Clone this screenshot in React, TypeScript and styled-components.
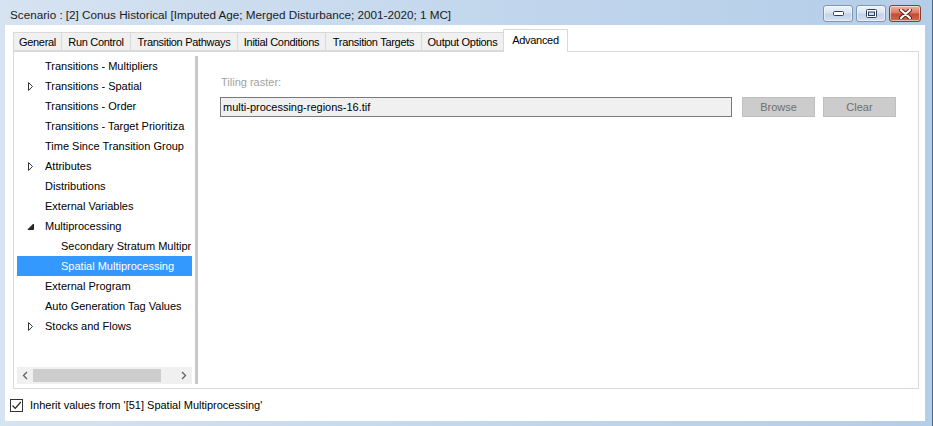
import React from "react";
import styled, { createGlobalStyle } from "styled-components";

const GlobalStyle = createGlobalStyle`
  html, body { margin: 0; padding: 0; background: #ffffff; }
  body { font-family: "Liberation Sans", Arial, sans-serif; font-size: 11px; color: #000; }
  * { box-sizing: border-box; }
`;

const Window = styled.div`
  width: 933px;
  height: 426px;
  display: flex;
  flex-direction: column;
  background: linear-gradient(to right, #d6e3f1 0%, #c3d7ed 50%, #b4cde8 100%);
  border-right: 1px solid #4a6788;
  overflow: hidden;
`;

const TitleBar = styled.div`
  height: 25px;
  flex: none;
  display: flex;
  align-items: flex-start;
  padding-left: 10px;
  padding-right: 11px;
`;

const Title = styled.div`
  font-size: 11.7px;
  line-height: 14px;
  padding-top: 8px;
  color: #1b1b1b;
  white-space: nowrap;
`;

const WinButtons = styled.div`
  margin-left: auto;
  padding-top: 5px;
  display: flex;
  gap: 3px;
`;

const WinButton = styled.div<{ $close?: boolean; $w: number }>`
  width: ${(p) => p.$w}px;
  height: 17px;
  border-radius: 3px;
  display: flex;
  align-items: center;
  justify-content: center;
  border: 1px solid ${(p) => (p.$close ? "#8b3b2c" : "#7f96b4")};
  background: ${(p) =>
    p.$close
      ? "linear-gradient(to bottom, #eeb3a5 0%, #d9765f 48%, #c44a32 52%, #d0684f 100%)"
      : "linear-gradient(to bottom, #eef3fa 0%, #d9e4f1 48%, #c2d3e8 52%, #d3e1f1 100%)"};
  box-shadow: inset 0 0 0 1px rgba(255, 255, 255, 0.55);
`;

const Client = styled.div`
  flex: 1;
  margin: 0 7px 5px 5px;
  background: #ffffff;
  display: flex;
  flex-direction: column;
`;

const TabControl = styled.div`
  margin: 4px 6px 0 8px;
  display: flex;
  flex-direction: column;
`;

const TabStrip = styled.div`
  height: 22px;
  display: flex;
  align-items: flex-end;
  position: relative;
  z-index: 1;
`;

const Tab = styled.div<{ $w: number; $active?: boolean }>`
  width: ${(p) => p.$w}px;
  height: ${(p) => (p.$active ? 23 : 19)}px;
  margin-right: -1px;
  margin-bottom: ${(p) => (p.$active ? -1 : 0)}px;
  border: 1px solid #d9d9d9;
  border-bottom: ${(p) => (p.$active ? "none" : "1px solid #d9d9d9")};
  background: ${(p) => (p.$active ? "#ffffff" : "#f0f0f0")};
  display: flex;
  align-items: center;
  justify-content: center;
  padding-bottom: ${(p) => (p.$active ? 2 : 0)}px;
  white-space: nowrap;
  letter-spacing: -0.3px;
  color: #000;
  position: relative;
  z-index: ${(p) => (p.$active ? 2 : 1)};
`;

const TabPanel = styled.div`
  height: 338px;
  border: 1px solid #d9d9d9;
  background: #ffffff;
  display: flex;
  padding: 4px 0 4px 3px;
`;

const TreeWrap = styled.div`
  width: 175px;
  display: flex;
  flex-direction: column;
  margin-right: 3px;
`;

const TreeRows = styled.div`
  flex: 1;
  overflow: hidden;
`;

const Row = styled.div<{ $level: number; $selected?: boolean }>`
  height: 20px;
  display: flex;
  align-items: center;
  padding-left: ${(p) => (p.$level === 0 ? 28 : 44)}px;
  background: ${(p) => (p.$selected ? "#3399ff" : "transparent")};
  color: ${(p) => (p.$selected ? "#ffffff" : "#000000")};
  white-space: nowrap;
  overflow: hidden;
  position: relative;
`;

const Expander = styled.span`
  position: absolute;
  left: 10px;
  top: 6px;
  width: 8px;
  height: 9px;
  display: flex;
`;

const HScroll = styled.div`
  height: 17px;
  display: flex;
  align-items: center;
  background: #f0f0f0;
`;

const ScrollArrow = styled.div`
  width: 16px;
  height: 17px;
  display: flex;
  align-items: center;
  justify-content: center;
  flex: none;
`;

const Track = styled.div`
  flex: 1;
  height: 17px;
  display: flex;
  align-items: center;
`;

const Thumb = styled.div`
  height: 13px;
  background: #cdcdcd;
`;

const Splitter = styled.div`
  width: 3px;
  background: #c9c9c9;
  flex: none;
`;

const Content = styled.div`
  flex: 1;
  padding: 19px 21px 0 22px;
  display: flex;
  flex-direction: column;
`;

const FieldLabel = styled.div`
  color: #a2a2a2;
  height: 14px;
  line-height: 14px;
  padding-left: 1px;
  margin-bottom: 8px;
`;

const FieldRow = styled.div`
  display: flex;
  align-items: center;
`;

const TextBox = styled.div`
  width: 512px;
  height: 20px;
  border: 1px solid #7a7a7a;
  background: #f0f0f0;
  padding-left: 2px;
  display: flex;
  align-items: center;
  white-space: nowrap;
`;

const Button = styled.div<{ $ml: number }>`
  width: 73px;
  height: 20px;
  margin-left: ${(p) => p.$ml}px;
  background: #cccccc;
  border: 1px solid #bfbfbf;
  color: #6f6f6f;
  display: flex;
  align-items: center;
  justify-content: center;
`;

const Footer = styled.div`
  display: flex;
  align-items: center;
  padding: 9px 0 0 5px;
`;

const CheckBox = styled.span`
  width: 13px;
  height: 13px;
  border: 1px solid #333333;
  background: #ffffff;
  display: flex;
  align-items: center;
  justify-content: center;
  margin-right: 7px;
`;

const FooterLabel = styled.span`
  line-height: 14px;
`;

type Item = { label: string; level: number; exp?: "closed" | "open"; selected?: boolean };

const items: Item[] = [
  { label: "Transitions - Multipliers", level: 0 },
  { label: "Transitions - Spatial", level: 0, exp: "closed" },
  { label: "Transitions - Order", level: 0 },
  { label: "Transitions - Target Prioritiza", level: 0 },
  { label: "Time Since Transition Group", level: 0 },
  { label: "Attributes", level: 0, exp: "closed" },
  { label: "Distributions", level: 0 },
  { label: "External Variables", level: 0 },
  { label: "Multiprocessing", level: 0, exp: "open" },
  { label: "Secondary Stratum Multipr", level: 1 },
  { label: "Spatial Multiprocessing", level: 1, selected: true },
  { label: "External Program", level: 0 },
  { label: "Auto Generation Tag Values", level: 0 },
  { label: "Stocks and Flows", level: 0, exp: "closed" },
];

const tabs: { label: string; w: number; active?: boolean }[] = [
  { label: "General", w: 49 },
  { label: "Run Control", w: 70 },
  { label: "Transition Pathways", w: 108 },
  { label: "Initial Conditions", w: 89 },
  { label: "Transition Targets", w: 97 },
  { label: "Output Options", w: 83 },
  { label: "Advanced", w: 65, active: true },
];

const ClosedArrow = () => (
  <svg width="8" height="9" viewBox="0 0 8 9">
    <path d="M1.5 0.5 L5.5 4.5 L1.5 8.5 Z" fill="#fff" stroke="#333" strokeWidth="1" />
  </svg>
);

const OpenArrow = () => (
  <svg width="8" height="9" viewBox="0 0 8 9">
    <path d="M6.5 2 L6.5 7.5 L1 7.5 Z" fill="#262626" stroke="#262626" strokeWidth="1" />
  </svg>
);

export default function App() {
  return (
    <>
      <GlobalStyle />
      <Window>
        <TitleBar>
          <Title>Scenario : [2] Conus Historical [Imputed Age; Merged Disturbance; 2001-2020; 1 MC]</Title>
          <WinButtons>
            <WinButton $w={30}>
              <svg width="11" height="5" viewBox="0 0 11 5">
                <rect x="0.5" y="0.5" width="10" height="4" rx="1" fill="#fff" stroke="#2d3e5a" />
              </svg>
            </WinButton>
            <WinButton $w={30}>
              <svg width="11" height="9" viewBox="0 0 11 9">
                <rect x="0.5" y="0.5" width="10" height="8" rx="1" fill="#fff" stroke="#2d3e5a" />
                <rect x="2.5" y="3" width="6" height="3.5" fill="#cfdbea" stroke="#2d3e5a" strokeWidth="1" />
              </svg>
            </WinButton>
            <WinButton $w={32} $close>
              <svg width="13" height="10" viewBox="0 0 13 10">
                <path d="M2 1 L11 9 M11 1 L2 9" stroke="#5a1d14" strokeWidth="4" strokeLinecap="round" />
                <path d="M2 1 L11 9 M11 1 L2 9" stroke="#ffffff" strokeWidth="2.2" strokeLinecap="round" />
              </svg>
            </WinButton>
          </WinButtons>
        </TitleBar>
        <Client>
          <TabControl>
            <TabStrip>
              {tabs.map((t) => (
                <Tab key={t.label} $w={t.w} $active={t.active}>
                  {t.label}
                </Tab>
              ))}
            </TabStrip>
            <TabPanel>
              <TreeWrap>
                <TreeRows>
                  {items.map((it) => (
                    <Row key={it.label} $level={it.level} $selected={it.selected}>
                      {it.exp && <Expander>{it.exp === "closed" ? <ClosedArrow /> : <OpenArrow />}</Expander>}
                      {it.label}
                    </Row>
                  ))}
                </TreeRows>
                <HScroll>
                  <ScrollArrow>
                    <svg width="6" height="9" viewBox="0 0 6 9">
                      <path d="M5 1 L1.5 4.5 L5 8" fill="none" stroke="#606060" strokeWidth="1.3" />
                    </svg>
                  </ScrollArrow>
                  <Track>
                    <Thumb style={{ width: 128 }} />
                  </Track>
                  <ScrollArrow>
                    <svg width="6" height="9" viewBox="0 0 6 9">
                      <path d="M1 1 L4.5 4.5 L1 8" fill="none" stroke="#606060" strokeWidth="1.3" />
                    </svg>
                  </ScrollArrow>
                </HScroll>
              </TreeWrap>
              <Splitter />
              <Content>
                <FieldLabel>Tiling raster:</FieldLabel>
                <FieldRow>
                  <TextBox>multi-processing-regions-16.tif</TextBox>
                  <Button $ml={10}>Browse</Button>
                  <Button $ml={8}>Clear</Button>
                </FieldRow>
              </Content>
            </TabPanel>
          </TabControl>
          <Footer>
            <CheckBox>
              <svg width="11" height="11" viewBox="0 0 11 11">
                <path d="M1.5 5.5 L4.2 8.3 L9.8 2" fill="none" stroke="#222" strokeWidth="1.2" />
              </svg>
            </CheckBox>
            <FooterLabel>Inherit values from '[51] Spatial Multiprocessing'</FooterLabel>
          </Footer>
        </Client>
      </Window>
    </>
  );
}
